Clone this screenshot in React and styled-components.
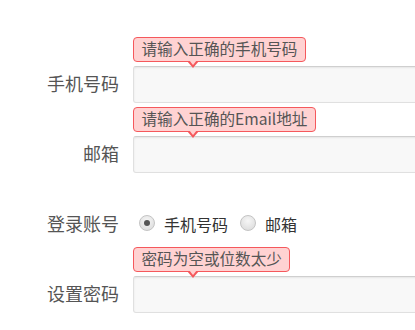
import React from "react";
import styled, { createGlobalStyle } from "styled-components";

const Global = createGlobalStyle`
  html, body { margin: 0; padding: 0; background: #fff; overflow: hidden; }
  body { font-family: "Noto Sans CJK SC", "Noto Sans", sans-serif; }
`;

const Form = styled.form`
  display: flex;
  flex-direction: column;
  gap: 33px;
  padding-top: 66px;
  width: 415px;
  overflow: hidden;
`;

const Row = styled.div`
  display: flex;
  align-items: center;
  height: 37px;
`;

const Label = styled.label`
  flex: 0 0 120px;
  box-sizing: border-box;
  text-align: right;
  padding: 0 1px 3px 0;
  margin-right: 13px;
  font-size: 18px;
  color: #555;
  line-height: 34px;
`;

const Field = styled.div`
  position: relative;
  flex: 1 0 auto;
  height: 37px;
`;

const Input = styled.input`
  box-sizing: border-box;
  width: 300px;
  height: 37px;
  border: 1px solid #e0e0e0;
  border-top-color: #cfcfcf;
  border-radius: 3px;
  background: #f8f8f8;
  box-shadow: inset 0 1px 2px rgba(0, 0, 0, 0.08);
  outline: none;
  padding: 0 8px;
  font: inherit;
`;

const Tip = styled.div`
  position: absolute;
  left: 0;
  bottom: calc(100% + 4px);
  box-sizing: border-box;
  height: 25px;
  padding: 0 7.5px;
  white-space: nowrap;
  background: #ffd2d2;
  border: 1.5px solid #f5585c;
  border-radius: 4px;
  color: #555;
  font-size: 15.6px;
  line-height: 21px;
  z-index: 2;

  &::before,
  &::after {
    content: "";
    position: absolute;
    width: 0;
    height: 0;
    border-style: solid;
  }
  &::before {
    top: 100%;
    left: ${(p) => p.$arrow}px;
    border-width: 7px 6.5px 0 6.5px;
    border-color: #f5585c transparent transparent transparent;
  }
  &::after {
    top: calc(100% - 1px);
    left: ${(p) => p.$arrow + 2}px;
    border-width: 5.5px 4.5px 0 4.5px;
    border-color: #ffd2d2 transparent transparent transparent;
  }
`;

const Radios = styled.div`
  display: flex;
  align-items: center;
  font-size: 16px;
  color: #333;
  padding-bottom: 1px;
`;

const RadioLabel = styled.label`
  display: flex;
  align-items: center;
  margin-right: 12px;
`;

const Radio = styled.input`
  appearance: none;
  -webkit-appearance: none;
  box-sizing: border-box;
  width: 16px;
  height: 16px;
  margin: -3px 9px 0 6px;
  border-radius: 50%;
  border: 1px solid #c4c4c4;
  background: radial-gradient(circle at 50% 35%, #f6f6f6 0%, #d8d8d8 100%);
  position: relative;

  &:checked::after {
    content: "";
    position: absolute;
    left: 4px;
    top: 4px;
    width: 6px;
    height: 6px;
    border-radius: 50%;
    background: #555;
  }
`;

const RadioRow = styled(Row)`
  & ${RadioLabel} + ${RadioLabel} ${Radio} {
    margin-left: 0;
  }
`;

function TextRow({ label, tip, type = "text" }) {
  return (
    <Row>
      <Label>{label}</Label>
      <Field>
        <Tip $arrow={53}>{tip}</Tip>
        <Input type={type} />
      </Field>
    </Row>
  );
}

export default function App() {
  return (
    <>
      <Global />
      <Form onSubmit={(e) => e.preventDefault()}>
        <TextRow label="手机号码" tip="请输入正确的手机号码" />
        <TextRow label="邮箱" tip="请输入正确的Email地址" />
        <RadioRow>
          <Label>登录账号</Label>
          <Radios>
            <RadioLabel>
              <Radio type="radio" name="acc" defaultChecked />
              手机号码
            </RadioLabel>
            <RadioLabel>
              <Radio type="radio" name="acc" />
              邮箱
            </RadioLabel>
          </Radios>
        </RadioRow>
        <TextRow label="设置密码" tip="密码为空或位数太少" type="password" />
      </Form>
    </>
  );
}
